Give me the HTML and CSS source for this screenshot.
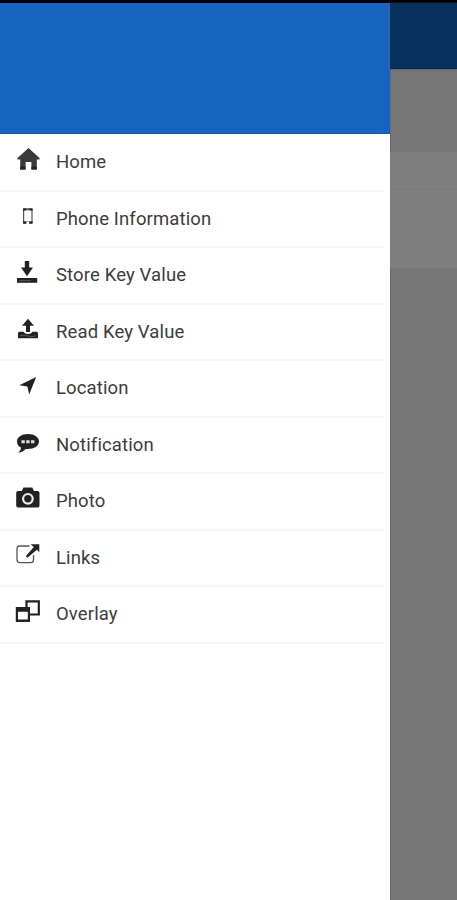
FILE: index.html
```html
<!DOCTYPE html>
<html lang="en">
<head>
<meta charset="utf-8">
<title>Menu</title>
<link rel="stylesheet" href="styles.css">
</head>
<body>
<div class="status"></div>
<div class="screen">
  <nav class="drawer">
    <div class="drawer-header"></div>
    <ul class="menu">
      <li class="item"><svg class="icon" viewBox="0 0 28 28"><path fill="#3a3a3a" d="M14.5 3 3.5 13V14.5H6.2V24.6H11.6V17H17.4V24.6H22.8V14.5H25.5V13Z"/><path d="M6.2 21.8H11.6V24.6H6.2ZM17.4 21.8H22.8V24.6H17.4Z"/></svg><span>Home</span></li>
      <li class="item"><svg class="icon" viewBox="0 0 28 28"><path fill="#555" fill-rule="evenodd" d="M10 6.2H17.6Q18.6 6.2 18.6 7.5V20.5Q18.6 21.8 17.6 21.8H10Q9 21.8 9 20.5V7.5Q9 6.2 10 6.2ZM10.2 8.2V19.4H17.4V8.2ZM12.6 20V21.8H15V20Z"/><path d="M9 6.4H12V8.4H9ZM15.6 6.4H18.6V8.4H15.6ZM9 19.4H12V21.6H9ZM15.6 19.4H18.6V21.6H15.6Z"/></svg><span>Phone Information</span></li>
      <li class="item"><svg class="icon" viewBox="0 0 28 28"><path d="M10.8 3H15.2V9.5H19L13 18.2 7 9.5H10.8Z"/><path d="M3 20H23.2V24.8H3Z"/><path class="detail" d="M5 22.7H17"/></svg><span>Store Key Value</span></li>
      <li class="item"><svg class="icon" viewBox="0 0 28 28"><path d="M14 3.8 20 10.8H16V17H12V10.8H8Z"/><path d="M5 16.8H9.5Q10.5 19 14 19T18.5 16.8H23L24 18V23.3H4V18Z"/><path class="detail" d="M6 20.8Q10 19.5 14 21T22 20.8"/></svg><span>Read Key Value</span></li>
      <li class="item"><svg class="icon" viewBox="0 0 28 28"><path d="M22.2 6 15.2 23.5 13.4 15.6 5.3 14.2Z"/></svg><span>Location</span></li>
      <li class="item"><svg class="icon" viewBox="0 0 28 28"><path d="M14 6C7.5 6 3 9.2 3 13.5 3 16.1 4.3 18.3 7 19.6 7 21.6 6 23.3 4 24.5 7.5 24.3 10.2 22.8 11.6 20.9 19.5 21.5 25 18.3 25 13.5 25 9.2 20.5 6 14 6Z"/><path fill="#ddd" d="M7.4 12.2H10.8V15.2H7.4ZM12.2 12.2H15.6V15.2H12.2ZM17 12.2H20.4V15.2H17Z"/></svg><span>Notification</span></li>
      <li class="item"><svg class="icon" viewBox="0 0 28 28"><path d="M9.5 3.5H18.2L20 7H23.5Q25.5 7 25.5 9V21.5Q25.5 23.6 23.5 23.6H4Q2.2 23.6 2.2 21.5V9Q2.2 7 4 7H7.7Z"/><circle cx="13.9" cy="14.8" r="4.8" fill="none" stroke="#eee" stroke-width="2.2"/></svg><span>Photo</span></li>
      <li class="item"><svg class="icon" viewBox="0 0 28 28"><path fill="none" stroke="#555" stroke-width="1.3" d="M15.5 5H6Q3 5 3 8V18.5Q3 21.7 6 21.7H16.5Q19.5 21.7 19.5 18.5V14"/><path d="M16.5 3.2H25.3V11.2L22.9 8.8 13.4 16.8 11.8 15.2 19.8 6Z"/></svg><span>Links</span></li>
      <li class="item"><svg class="icon" viewBox="0 0 28 28"><path fill="none" stroke="#222" stroke-width="2.2" d="M12.5 10V4.4H24.8V17.5H16"/><path fill-rule="evenodd" d="M1.8 10H16V24.9H1.8ZM4 14.8V22.6H13.8V14.8Z"/></svg><span>Overlay</span></li>
    </ul>
  </nav>
  <main class="page">
    <div class="toolbar"></div>
    <div class="spacer"></div>
    <div class="row first"></div>
    <div class="row"></div>
  </main>
</div>
</body>
</html>
```
FILE: styles.css
```css
* { box-sizing: border-box; }
body {
  margin: 0;
  height: 900px;
  overflow: hidden;
  display: flex;
  flex-direction: column;
  font-family: Roboto, "Liberation Sans", sans-serif;
}
.status { height: 3px; background: #000; flex: none; }
.screen { flex: 1; display: flex; }
.drawer { width: 390px; background: #fff; flex: none; }
.drawer-header { height: 131px; background: #1764c0; border-bottom: 1px solid #0f58b4; }
.menu { list-style: none; margin: 0; padding: 0; }
.item {
  position: relative;
  display: flex;
  gap: 14px;
  height: 56.5px;
  padding-left: 14px;
  color: #3c3c3c;
  font-size: 18.5px;
  line-height: 56.5px;
  letter-spacing: 0.13px;
}
.item::after {
  content: "";
  position: absolute;
  left: 0;
  right: 6px;
  bottom: -1px;
  height: 2px;
  background: #f6f6f6;
}
.icon { width: 28px; height: 28px; margin-top: 11px; flex: none; fill: #222; }
.detail { fill: none; stroke: #555; stroke-width: 1; }
.page { flex: 1; background: #787878; box-shadow: inset 2px 0 1px -1px #6b6b6b; }
.toolbar { height: 66px; background: #08315f; border-bottom: 1px solid #052850; box-shadow: 0 1px 3px #666; }
.spacer { height: 83px; }
.row { height: 78px; background: #7f7f7f; }
.row.first { height: 38px; border-bottom: 1px solid #7a7a7a; }
```
